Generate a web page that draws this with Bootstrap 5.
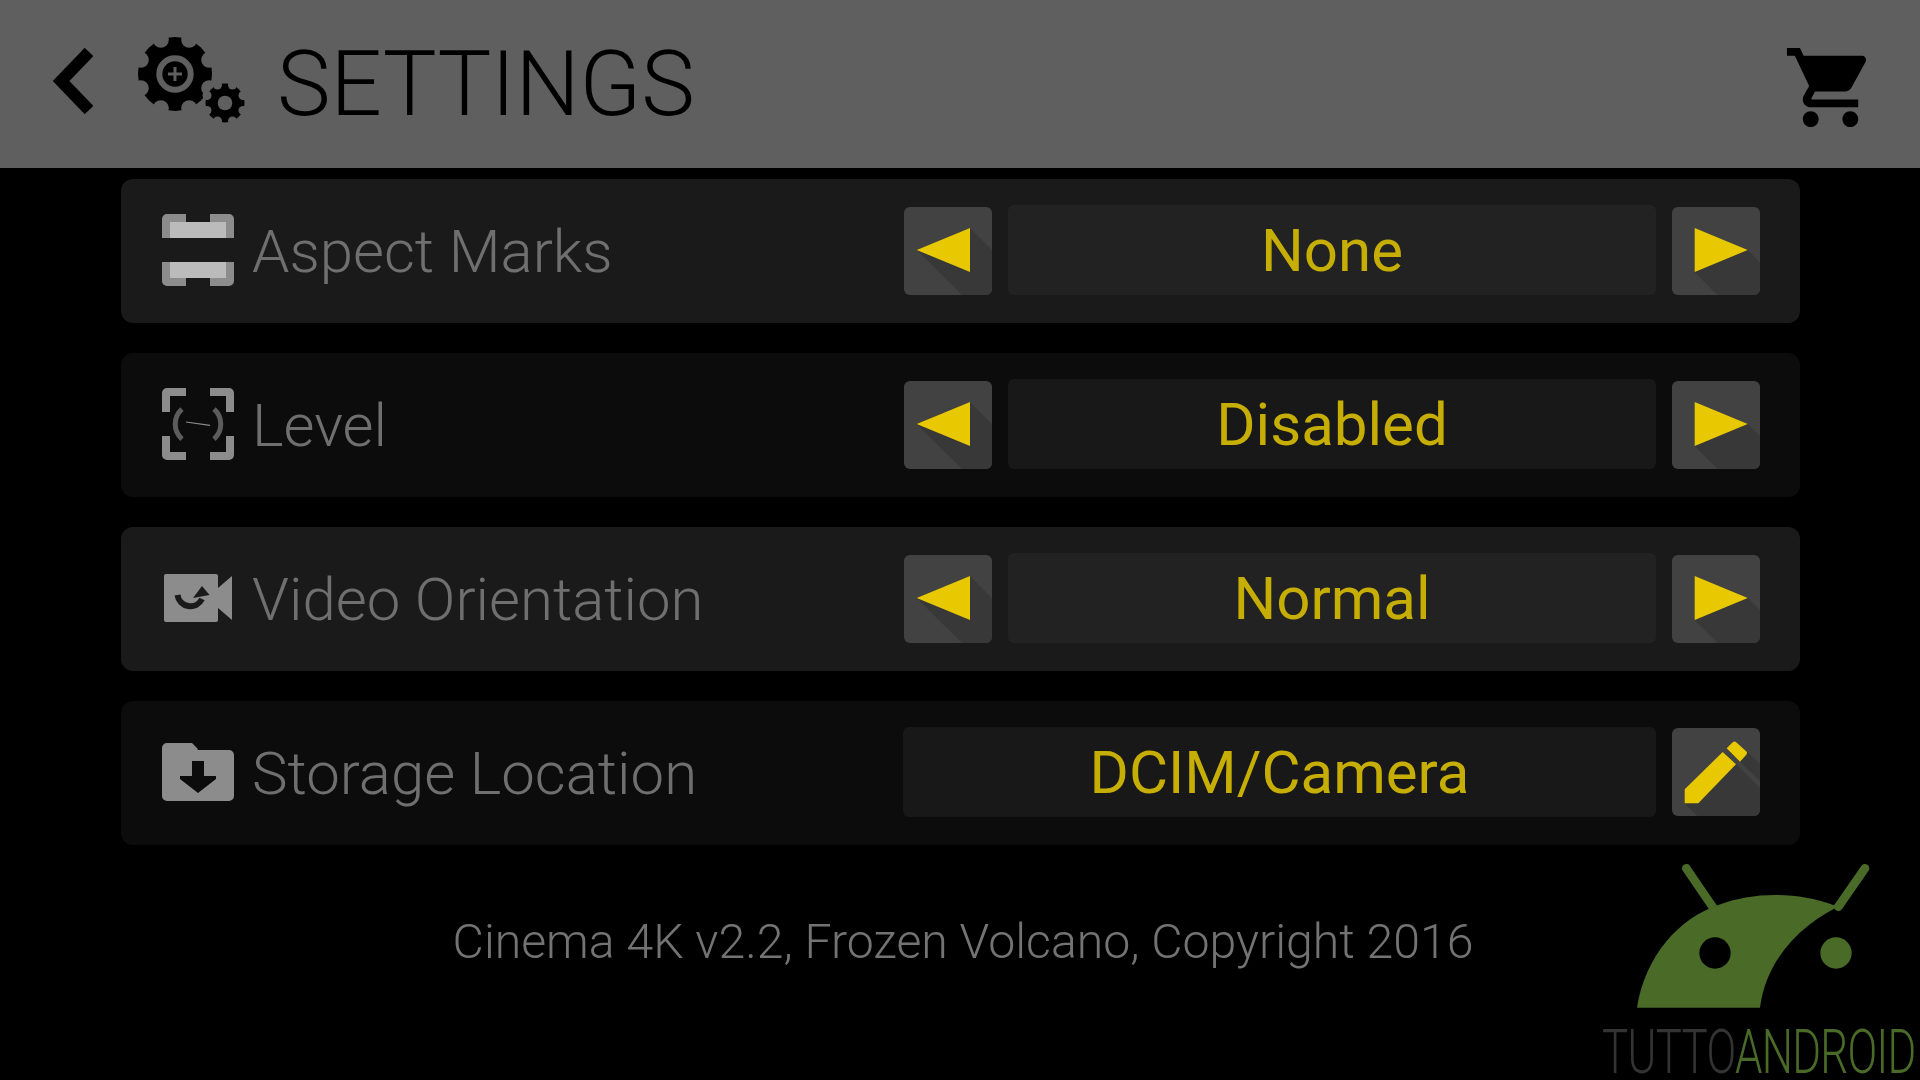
<!DOCTYPE html>
<html lang="en">
<head>
<meta charset="utf-8">
<title>Settings</title>
<link href="https://cdn.jsdelivr.net/npm/bootstrap@5.3.0/dist/css/bootstrap.min.css" rel="stylesheet">
<style>
html,body{height:100%}
body{background:#000;font-family:Roboto,"Liberation Sans",sans-serif;overflow:hidden;width:1920px;height:1080px}
.app-frame{position:relative;width:1920px;height:1080px}
.top-bar{height:168px;background:#5f5f5f;color:#000;padding-left:53px}
.back-ico{width:40px;height:66px;display:block;margin-bottom:6px}
.gear-ico{width:112px;height:90px;display:block;margin-left:44px;margin-bottom:4px}
.page-title{font-weight:300;font-size:90.3px;line-height:1;margin:0 0 0 28px;letter-spacing:0;color:#000;font-family:Roboto,sans-serif}
.cart-ico{width:95px;height:95px;display:block;margin-right:42px;margin-top:7px}
.list-wrap{padding:11px 120px 0 121px;gap:30px}
.set-row{height:144px;border-radius:12px;padding:0 40px 2px 41px}
.set-row.tone-a{background:#1a1a1a}
.set-row.tone-b{background:#0c0c0c}
.tone-a .val-box{background:#222}
.tone-b .val-box{background:#181818}
.row-ico{width:72px;height:72px;flex:none;display:block}
.row-label{font-weight:300;font-size:59.9px;line-height:72px;color:#6f6f6f;margin:3px 0 0 18px;white-space:nowrap}
.ctrls{width:857px;gap:16px;height:90px}
.step-btn{width:88px;height:88px;flex:none;background:#424242;border:0;padding:0;border-radius:6px;overflow:hidden;display:block;margin-top:2px}
.step-btn.edit-btn{margin-top:1px}
.step-btn.first-btn{margin-left:1px}
.step-btn svg{display:block;width:88px;height:88px}
.val-box{height:90px;border-radius:6px;color:#c6ae05;font-size:60px;font-weight:400;line-height:92px;text-align:center}
.foot-line{font-weight:300;font-size:48.2px;line-height:60px;color:#737373;text-align:center;margin:37px 0 0 5px}
.logo-mark{position:absolute;right:0;bottom:0;width:330px;height:230px}
.logo-mark svg{display:block;width:330px;height:158px}
.logo-word{position:absolute;left:12px;bottom:6px;font-weight:300;font-size:61px;line-height:44px;letter-spacing:-1px;white-space:nowrap;color:#333;transform:scaleX(.72);transform-origin:left center}
.logo-word span{color:#4a6a28}
</style>
</head>
<body>
<div class="app-frame">
  <header class="top-bar d-flex align-items-center">
    <svg class="back-ico" viewBox="0 0 40 66"><polyline points="36,4 8,33 36,62" fill="none" stroke="#000" stroke-width="12"/></svg>
    <svg class="gear-ico" viewBox="0 0 112 90">
      <circle cx="38" cy="37" r="37" fill="#000"/>
      <g fill="#5f5f5f">
        <circle cx="72.200" cy="22.800" r="8"/><circle cx="72.200" cy="51.200" r="8"/><circle cx="3.800" cy="22.800" r="8"/><circle cx="3.800" cy="51.200" r="8"/>
        <circle cx="52.200" cy="2.800" r="8"/><circle cx="52.200" cy="71.200" r="8"/><circle cx="23.800" cy="2.800" r="8"/><circle cx="23.800" cy="71.200" r="8"/>
      </g>
      <circle cx="38" cy="37" r="15.700" fill="none" stroke="#5f5f5f" stroke-width="6"/>
      <path d="M38 30v14M31 37h14" stroke="#5f5f5f" stroke-width="3"/>
      <circle cx="88" cy="66" r="19.500" fill="#000"/>
      <g fill="#5f5f5f">
        <circle cx="106" cy="58.500" r="4.500"/><circle cx="106" cy="73.500" r="4.500"/><circle cx="70" cy="58.500" r="4.500"/><circle cx="70" cy="73.500" r="4.500"/>
        <circle cx="95.500" cy="48" r="4.500"/><circle cx="95.500" cy="84" r="4.500"/><circle cx="80.500" cy="48" r="4.500"/><circle cx="80.500" cy="84" r="4.500"/>
      </g>
      <circle cx="88" cy="66" r="7.300" fill="#5f5f5f"/>
    </svg>
    <h1 class="page-title">SETTINGS</h1>
    <svg class="cart-ico ms-auto" viewBox="0 0 24 24"><path d="M7 18c-1.1 0-1.99.9-1.99 2S5.9 22 7 22s2-.9 2-2-.9-2-2-2zM1 2v2h2l3.6 7.59-1.35 2.45c-.16.28-.25.61-.25.96 0 1.1.9 2 2 2h12v-2H7.42c-.14 0-.25-.11-.25-.25l.03-.12.9-1.63h7.45c.75 0 1.41-.41 1.75-1.03l3.58-6.49c.08-.14.12-.31.12-.48 0-.55-.45-1-1-1H5.21l-.94-2H1zm16 16c-1.1 0-1.99.9-1.99 2s.89 2 1.99 2 2-.9 2-2-.9-2-2-2z" fill="#000"/></svg>
  </header>

  <main class="list-wrap d-flex flex-column">
    <section class="set-row tone-a d-flex align-items-center">
      <svg class="row-ico" viewBox="0 0 72 72">
        <path d="M5 0h19v8h24V0h19a5 5 0 0 1 5 5v19H0V5a5 5 0 0 1 5-5zM0 48h72v19a5 5 0 0 1-5 5H48v-8H24v8H5a5 5 0 0 1-5-5z" fill="#8c8c8c"/>
        <path d="M8 8h56v16H8zM8 48h56v16H8z" fill="#bbb"/>
      </svg>
      <span class="row-label">Aspect Marks</span>
      <div class="ctrls d-flex ms-auto">
        <button type="button" class="step-btn first-btn btn" aria-label="Previous"><svg viewBox="0 0 88 88"><polygon points="66,21 88,43 88,88 58,88 12.7,43" fill="#383838"/><polygon points="12.7,43 66,21 66,65" fill="#e8c800"/></svg></button>
        <div class="val-box flex-grow-1">None</div>
        <button type="button" class="step-btn btn" aria-label="Next"><svg viewBox="0 0 88 88"><polygon points="75.7,43 88,55.3 88,88 45.7,88 22.7,65" fill="#383838"/><polygon points="22.7,21 22.7,65 75.7,43" fill="#e8c800"/></svg></button>
      </div>
    </section>

    <section class="set-row tone-b d-flex align-items-center">
      <svg class="row-ico" viewBox="0 0 72 72">
        <path d="M5 0h19v8H8v16H0V5a5 5 0 0 1 5-5zM48 0h19a5 5 0 0 1 5 5v19h-8V8H48zM0 48h8v16h16v8H5a5 5 0 0 1-5-5zM64 48h8v19a5 5 0 0 1-5 5H48v-8h16z" fill="#8c8c8c"/>
        <path d="M20 21a20 20 0 0 0 0 30M52 21a20 20 0 0 1 0 30" fill="none" stroke="#5c5c5c" stroke-width="5"/>
        <path d="M24 34l24 3.300" stroke="#8c8c8c" stroke-width="1.200"/>
      </svg>
      <span class="row-label">Level</span>
      <div class="ctrls d-flex ms-auto">
        <button type="button" class="step-btn first-btn btn" aria-label="Previous"><svg viewBox="0 0 88 88"><polygon points="66,21 88,43 88,88 58,88 12.7,43" fill="#383838"/><polygon points="12.7,43 66,21 66,65" fill="#e8c800"/></svg></button>
        <div class="val-box flex-grow-1">Disabled</div>
        <button type="button" class="step-btn btn" aria-label="Next"><svg viewBox="0 0 88 88"><polygon points="75.7,43 88,55.3 88,88 45.7,88 22.7,65" fill="#383838"/><polygon points="22.7,21 22.7,65 75.7,43" fill="#e8c800"/></svg></button>
      </div>
    </section>

    <section class="set-row tone-a d-flex align-items-center">
      <svg class="row-ico" viewBox="0 0 72 72">
        <rect x="2" y="12" width="54" height="48" rx="2" fill="#8c8c8c"/>
        <polygon points="70,14 56,26 56,46 70,58" fill="#8c8c8c"/>
        <path d="M15.500 33A13 13 0 0 0 40 37" fill="none" stroke="#1a1a1a" stroke-width="6"/>
        <polygon points="40,24 47.500,33 31,36" fill="#1a1a1a"/>
      </svg>
      <span class="row-label">Video Orientation</span>
      <div class="ctrls d-flex ms-auto">
        <button type="button" class="step-btn first-btn btn" aria-label="Previous"><svg viewBox="0 0 88 88"><polygon points="66,21 88,43 88,88 58,88 12.7,43" fill="#383838"/><polygon points="12.7,43 66,21 66,65" fill="#e8c800"/></svg></button>
        <div class="val-box flex-grow-1">Normal</div>
        <button type="button" class="step-btn btn" aria-label="Next"><svg viewBox="0 0 88 88"><polygon points="75.7,43 88,55.3 88,88 45.7,88 22.7,65" fill="#383838"/><polygon points="22.7,21 22.7,65 75.7,43" fill="#e8c800"/></svg></button>
      </div>
    </section>

    <section class="set-row tone-b d-flex align-items-center">
      <svg class="row-ico" viewBox="0 0 72 72">
        <path d="M5 7h25l5 5 1 2h31a5 5 0 0 1 5 5v41a5 5 0 0 1-5 5H5a5 5 0 0 1-5-5V12a5 5 0 0 1 5-5z" fill="#8c8c8c"/>
        <polygon points="30,25 42,25 42,40 54,40 54,43 36,57 18,43 18,40 30,40" fill="#0c0c0c"/>
      </svg>
      <span class="row-label">Storage Location</span>
      <div class="ctrls d-flex ms-auto">
        <div class="val-box flex-grow-1">DCIM/Camera</div>
        <button type="button" class="step-btn edit-btn btn" aria-label="Edit"><svg viewBox="0 0 88 88">
          <polygon points="64,36 88,60 88,88 39,88 26.300,75.300" fill="#383838"/>
          <polygon points="12.700,75.300 26.300,75.300 39,88 25.400,88" fill="#383838"/>
          <polygon points="75.300,23.700 88,36 88,53 68,33.700" fill="#383838"/>
          <polygon points="12.700,61.300 50.700,24 64,36.300 26.300,75.300 12.700,75.300" fill="#e8c800"/>
          <path d="M54.700 20.300l6-6a2.500 2.500 0 0 1 3.500 0l10 9a2.500 2.500 0 0 1 .3 3.300L68 33.700z" fill="#e8c800"/>
        </svg></button>
      </div>
    </section>

    <p class="foot-line">Cinema 4K v2.2, Frozen Volcano, Copyright 2016</p>
  </main>

  <aside class="logo-mark">
    <svg viewBox="0 0 990 474">
      <path d="M289 55L371 175M825 55L745 170" stroke="#4a6a28" stroke-width="26" stroke-linecap="round"/>
      <path d="M141 473C165 320 265 205 385 165C490 125 620 125 730 165L770 158C640 215 530 320 510 473Z" fill="#4a6a28"/>
      <circle cx="375" cy="309" r="47" fill="#000"/>
      <circle cx="738" cy="309" r="47" fill="#4a6a28"/>
    </svg>
    <div class="logo-word">TUTTO<span>ANDROID</span></div>
  </aside>
</div>
<script src="https://cdn.jsdelivr.net/npm/bootstrap@5.3.0/dist/js/bootstrap.bundle.min.js"></script>
</body>
</html>
